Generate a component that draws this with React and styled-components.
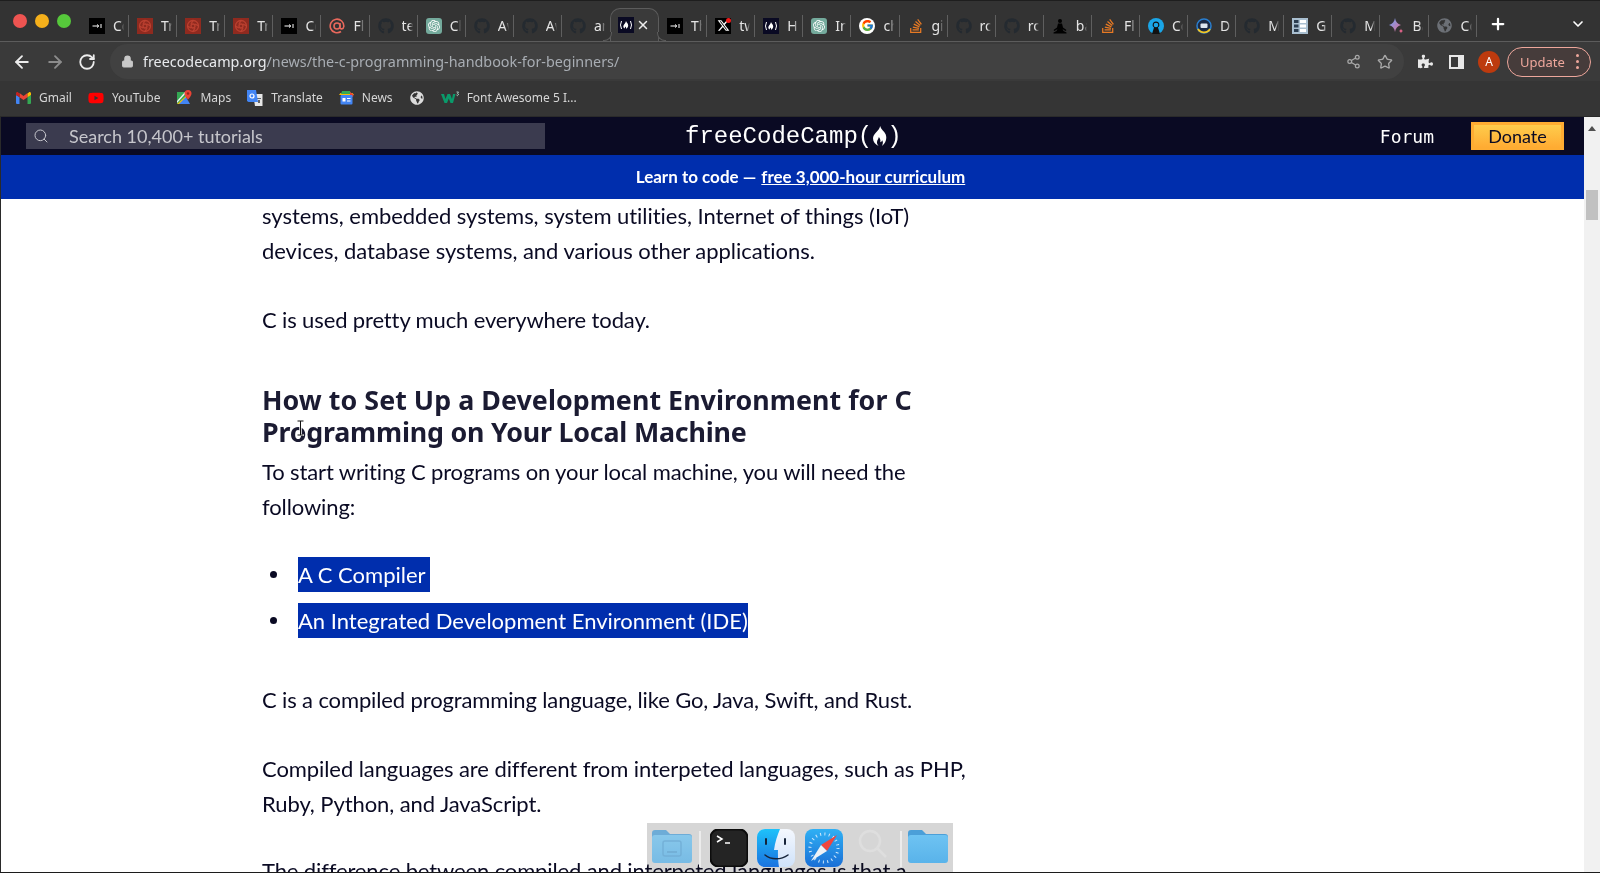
import React from 'react';
import styled, { createGlobalStyle } from 'styled-components';
import { FaGithub, FaStackOverflow, FaPuzzlePiece, FaGlobeAmericas, FaYoutube } from 'react-icons/fa';
import { FaXTwitter } from 'react-icons/fa6';
import { FcGoogle } from 'react-icons/fc';
import { SiOpenai } from 'react-icons/si';
import { ArrowLeft, ArrowRight, RotateCw, Lock, Share2, Star, Plus, ChevronDown, Search, X } from 'lucide-react';

const GlobalStyle = createGlobalStyle`
  html, body { margin: 0; padding: 0; overflow: hidden; background: #fff; }
  * { box-sizing: border-box; }
`;

const Window = styled.div`
  position: relative;
  width: 1600px;
  height: 873px;
  overflow: hidden;
  display: flex;
  flex-direction: column;
  font-family: "Noto Sans", sans-serif;
  border-bottom: 1px solid #1c1c1c;
`;

const TabStrip = styled.div`
  height: 42px;
  flex: none;
  display: flex;
  background: #333333;
  border-top: 1px solid #1e1e1e;
  border-bottom: 1px solid #5c5c5c;
`;
const Lights = styled.div`
  width: 81px;
  flex: none;
  display: flex;
  gap: 8px;
  padding: 13px 0 0 13px;
`;
const Light = styled.span`
  width: 14px;
  height: 14px;
  border-radius: 50%;
  background: ${p => p.$color};
`;
const Tab = styled.div`
  position: relative;
  width: 48.1px;
  flex: none;
  height: 41px;
  display: flex;
  align-items: center;
  gap: 8px;
  padding: 8px 0 0 8px;
  color: #e4e4e4;
  font-size: 14px;
  &::after {
    content: '';
    display: ${p => (p.$nosep ? 'none' : 'block')};
    position: absolute;
    right: 0;
    top: 14px;
    bottom: 5px;
    width: 1px;
    background: #5f5f5f;
  }
`;
const ActiveTab = styled.div`
  position: relative;
  width: 49px;
  flex: none;
  height: 33px;
  margin-top: 7px;
  display: flex;
  align-items: center;
  gap: 1px;
  padding-left: 7px;
  color: #e8e8e8;
  background: #3a3a3a;
  border: 1px solid #5c5c5c;
  border-bottom: none;
  border-radius: 10px 10px 0 0;
  z-index: 1;
  &::before, &::after {
    content: '';
    position: absolute;
    bottom: 0;
    width: 8px;
    height: 8px;
    border-bottom: 1px solid #5c5c5c;
    background: #333333;
  }
  &::before {
    left: -8px;
    border-right: 1px solid #5c5c5c;
    border-bottom-right-radius: 8px;
  }
  &::after {
    right: -8px;
    border-left: 1px solid #5c5c5c;
    border-bottom-left-radius: 8px;
  }
`;
const TabLabel = styled.span`
  width: 11px;
  overflow: hidden;
  white-space: nowrap;
  line-height: 20px;
  -webkit-mask-image: linear-gradient(90deg, #000 65%, transparent);
  mask-image: linear-gradient(90deg, #000 65%, transparent);
`;
const IconTile = styled.span`
  width: 16px;
  height: 16px;
  flex: none;
  display: flex;
  align-items: center;
  justify-content: center;
  background: ${p => p.$bg || 'transparent'};
  border-radius: ${p => p.$radius || 0}px;
  color: ${p => p.$color || '#fff'};
`;
const StripEnd = styled.div`
  flex: 1;
  display: flex;
  align-items: center;
  justify-content: space-between;
  padding: 6px 14px 0 12px;
  color: #fff;
`;

const Toolbar = styled.div`
  height: 39px;
  flex: none;
  display: flex;
  align-items: center;
  background: #3a3a3a;
  padding-left: 12px;
  color: #e6e6e6;
`;
const NavIcon = styled.span`
  width: 33px;
  flex: none;
  display: flex;
  color: ${p => p.$dim ? '#8c8c8c' : '#ececec'};
`;
const Omnibox = styled.div`
  width: 1294px;
  height: 35px;
  margin-left: -1px;
  flex: none;
  display: flex;
  align-items: center;
  background: #414141;
  border-radius: 18px;
  padding-left: 11px;
  color: #c8c8c8;
`;
const Url = styled.div`
  flex: 1;
  margin-left: 9px;
  font-size: 14.35px;
  color: #a8adb3;
  white-space: nowrap;
  b { font-weight: 400; color: #e8eaed; }
`;
const OmniActions = styled.div`
  display: flex;
  align-items: center;
  gap: 16px;
  padding-right: 11px;
  color: #a9a9a9;
`;
const ToolActions = styled.div`
  display: flex;
  align-items: center;
  margin-left: 14px;
  color: #e8e8e8;
`;
const Panel = styled.span`
  display: block;
  width: 15px;
  height: 14px;
  margin-left: 16px;
  border: 2px solid #e8e8e8;
  border-right-width: 6px;
  background: #3a3a3a;
`;
const Avatar = styled.span`
  width: 22px;
  height: 22px;
  margin-left: 14px;
  border-radius: 50%;
  background: #bd3a0e;
  color: #fff;
  font-size: 12px;
  display: flex;
  align-items: center;
  justify-content: center;
`;
const UpdatePill = styled.div`
  width: 84px;
  height: 30px;
  margin-left: 7px;
  border: 1px solid #eea79c;
  border-radius: 15px;
  background: #463c3b;
  color: #eea79c;
  font-size: 13px;
  display: flex;
  align-items: center;
  justify-content: space-between;
  padding: 0 11px 0 12px;
`;
const Dots = styled.span`
  display: flex;
  flex-direction: column;
  gap: 2.5px;
  i { display: block; width: 3.5px; height: 3.5px; border-radius: 50%; background: #eea79c; }
`;

const BookmarkBar = styled.div`
  height: 36px;
  flex: none;
  display: flex;
  align-items: center;
  gap: 16px;
  padding: 0 0 2px 16px;
  background: #353535;
  color: #d6d6d6;
  font-size: 12px;
  border-bottom: 1px solid #2a2a2a;
`;
const Bookmark = styled.div`
  display: flex;
  align-items: center;
  gap: 8px;
  white-space: nowrap;
`;

const Viewport = styled.div`
  flex: 1;
  min-height: 0;
  display: flex;
  border-left: 1px solid #2a2a2a;
`;
const Main = styled.div`
  flex: 1;
  min-width: 0;
  display: flex;
  flex-direction: column;
  overflow: hidden;
`;
const TopNav = styled.nav`
  height: 38px;
  flex: none;
  display: flex;
  align-items: center;
  background: #0a0a23;
  padding: 0 20px 0 25px;
`;
const SearchBox = styled.div`
  width: 519px;
  height: 26px;
  flex: none;
  display: flex;
  align-items: center;
  background: #3b3b4f;
  padding-left: 7px;
  color: #c6c6cc;
  font: 18px "Lato", sans-serif;
`;
const SearchText = styled.span`
  margin-left: 20px;
`;
const Logo = styled.div`
  margin-left: 140px;
  display: flex;
  align-items: center;
  color: #fff;
  font: 24px "Liberation Mono", monospace;
`;
const NavRight = styled.div`
  margin-left: auto;
  display: flex;
  align-items: center;
  gap: 37px;
`;
const ForumLink = styled.span`
  color: #fff;
  font: 18px "DejaVu Sans Mono", monospace;
`;
const DonateButton = styled.span`
  width: 93px;
  height: 28px;
  display: flex;
  align-items: center;
  justify-content: center;
  background: linear-gradient(#fecc4c, #ffac33);
  border: 3px solid #feac32;
  color: #0a0a23;
  font: 18px "Lato", sans-serif;
`;
const Banner = styled.div`
  height: 44px;
  flex: none;
  display: flex;
  align-items: center;
  justify-content: center;
  padding: 0 0 2px 16px;
  background: #002ead;
  color: #fff;
  font: 700 17px "Lato", sans-serif;
  u { margin-left: 5px; }
`;
const Article = styled.article`
  width: 972px;
  padding-left: 261px;
  color: #0a0a23;
  font: 22px/35px "Lato", sans-serif;
`;
const Para = styled.p`
  margin: ${p => p.$mt || 0}px 0 ${p => p.$mb ?? 33}px;
  letter-spacing: ${p => p.$ls || 0}px;
`;
const Heading = styled.h2`
  margin: 47px 0 6px;
  font: 700 26.8px/32px "Noto Sans", sans-serif;
  letter-spacing: 0.05px;
  color: #1b1b32;
`;
const HeadingTail = styled.span`
  letter-spacing: -0.2px;
`;
const List = styled.ul`
  margin: 33px 0 44px;
  padding: 0;
  list-style: none;
`;
const Item = styled.li`
  display: flex;
  align-items: center;
  margin-bottom: 11px;
  &:last-child { margin-bottom: 0; }
`;
const Bullet = styled.span`
  width: 7px;
  height: 7px;
  margin: 0 21px 0 8px;
  flex: none;
  border-radius: 50%;
  background: #0a0a23;
`;
const Selected = styled.span`
  display: inline-block;
  padding-right: ${p => p.$trail || 0}px;
  background: #002ead;
  color: #fff;
`;
const Scrollbar = styled.div`
  width: 16px;
  flex: none;
  background: #f1f1f1;
  display: flex;
  flex-direction: column;
  align-items: center;
  padding-top: 9px;
`;
const ScrollArrow = styled.span`
  width: 0;
  height: 0;
  border: 4px solid transparent;
  border-top: none;
  border-bottom: 5px solid #505050;
`;
const ScrollThumb = styled.span`
  width: 12px;
  height: 30px;
  margin-top: 59px;
  background: #c1c1c1;
`;

const Dock = styled.div`
  position: absolute;
  left: 647px;
  bottom: 0;
  width: 306px;
  height: 49px;
  display: flex;
  align-items: flex-start;
  padding: 6px 0 0 5px;
  &::before {
    content: '';
    position: absolute;
    inset: 0;
    background: #d6d6d6;
    mix-blend-mode: multiply;
  }
`;
const DockSlot = styled.span`
  position: relative;
  flex: none;
  width: ${p => p.$w}px;
  margin-left: ${p => p.$ml || 0}px;
  opacity: ${p => p.$fade || 1};
  display: flex;
`;
const DockRule = styled.span`
  position: relative;
  flex: none;
  width: 2px;
  height: 36px;
  margin: 2px 0 0 ${p => p.$ml}px;
  background: #ececec;
`;
const Cursor = styled.svg`
  position: absolute;
  left: 296px;
  top: 420px;
`;

const Flame = ({ size = 14, color = '#fff' }) => (
  <svg width={size * 0.75} height={size} viewBox="0 0 12 16">
    <path fill={color} d="M6.5 0c.6 2.6 3.2 4 4.4 6.6 1.3 3.2.2 7-3 9.4.9-1.6 1.1-3.2.3-4.7-.4 1-1 1.4-1.6 1.6.4-1.6-.2-3.2-1.2-4.2.1 1.6-1.6 2.8-1.4 4.6.1 1 .6 1.8 1.3 2.7C1.8 14.4.3 11.6 1 8.6 1.7 5.600 5.800 4 6.500 0z" />
  </svg>
);

function Favicon({ kind }) {
  switch (kind) {
    case 'term':
      return (
        <IconTile $bg="#000">
          <svg width="16" height="16" viewBox="0 0 16 16"><path d="M3.500 8h6M8 6.500 9.800 8 8 9.500M12 6v4" stroke="#fff" strokeWidth="1" fill="none" /></svg>
        </IconTile>
      );
    case 'swirl':
      return (
        <IconTile $bg="#8f2a1f">
          <svg width="16" height="16" viewBox="0 0 16 16" fill="none" stroke="#bb4030" strokeWidth="1.300">
            <circle cx="8" cy="8" r="2" />
            <path d="M8 2.500a5.500 5.500 0 0 1 5.500 5.500M13.500 8a5.500 5.500 0 0 1-5.500 5.500M8 13.500A5.500 5.500 0 0 1 2.500 8M2.500 8A5.500 5.500 0 0 1 8 2.500M8 2.500 6 6M13.500 8 10 6M8 13.500 10 10M2.500 8 6 10" />
          </svg>
        </IconTile>
      );
    case 'at':
      return (
        <IconTile>
          <svg width="16" height="16" viewBox="0 0 16 16" fill="none" stroke="#e8685c" strokeWidth="1.600">
            <circle cx="8" cy="8" r="3" />
            <path d="M11 5v4.500c0 2 3.500 2 3.800-1A6.800 6.800 0 1 0 12 13.500" />
          </svg>
        </IconTile>
      );
    case 'github':
      return <IconTile $color="#242a30"><FaGithub size={16} /></IconTile>;
    case 'gpt':
      return <IconTile $bg="#74aa9c" $radius={3}><SiOpenai size={12} /></IconTile>;
    case 'fcc':
      return (
        <IconTile $bg="#0a0a23" $color="#fff">
          <svg width="16" height="16" viewBox="0 0 16 16" fill="none" stroke="#fff" strokeWidth="1">
            <path d="M3.500 4Q1.500 8 3.500 12M12.500 4Q14.500 8 12.500 12" />
            <path fill="#fff" stroke="none" d="M8 4c.3 1.300 2.200 2.300 2.200 4.500 0 1.500-1 2.800-2.200 3.500.5-1-.200-2-.700-2.500-.2 1-.6 1.200-.6 2C5.500 11 5 9.800 5.500 8.500 6 7.200 7.800 6 8 4z" />
          </svg>
        </IconTile>
      );
    case 'x':
      return (
        <IconTile $bg="#000" style={{ position: 'relative' }}>
          <FaXTwitter size={13} />
          <svg width="5" height="5" style={{ position: 'absolute', right: 0, top: 0 }}><circle cx="2.500" cy="2.500" r="2.500" fill="#f01a1a" /></svg>
        </IconTile>
      );
    case 'google':
      return (
        <IconTile $bg="#fff" $radius={8}><FcGoogle size={13} /></IconTile>
      );
    case 'so':
      return <IconTile $color="#e87a24"><FaStackOverflow size={16} /></IconTile>;
    case 'yoga':
      return (
        <IconTile>
          <svg width="16" height="16" viewBox="0 0 16 16" fill="#000">
            <circle cx="8" cy="3" r="2" />
            <path d="M6 5.500h4l1 4 3.500 2.500-1 1L10.500 11l1 2 3 1.500v1H1.500v-1l3-1.500 1-2-3 2-1-1L5 9.500z" />
          </svg>
        </IconTile>
      );
    case 'ring':
      return (
        <IconTile>
          <svg width="16" height="16" viewBox="0 0 16 16">
            <circle cx="8" cy="8" r="8" fill="#1aa6e8" />
            <path d="M8 3.500a3.300 3.300 0 0 0-2 6L4 16h8l-2-6.500a3.300 3.300 0 0 0-2-6z" fill="#111" />
            <circle cx="8" cy="7" r="2.300" fill="#1aa6e8" />
          </svg>
        </IconTile>
      );
    case 'badge':
      return (
        <IconTile>
          <svg width="16" height="16" viewBox="0 0 16 16" fill="none">
            <circle cx="8" cy="8" r="7" fill="#1c2a44" stroke="#2a7fd0" strokeWidth="1.500" />
            <path d="M2 11a7 7 0 0 0 12 0" stroke="#f3c623" strokeWidth="1.800" />
            <rect x="4.500" y="5.500" width="7" height="4.500" rx="1" fill="#dfe6ee" />
          </svg>
        </IconTile>
      );
    case 'columns':
      return (
        <IconTile $bg="#a9bfd0">
          <svg width="16" height="16" viewBox="0 0 16 16" fill="#2b3d50">
            <path d="M2 2h4.500v3H2zM2 6.500h4.500v3H2zM2 11h4.500v3H2z" />
            <path fill="#fff" d="M8 2h6v3H8zM8 6.500h6v3H8zM8 11h6v3H8z" />
          </svg>
        </IconTile>
      );
    case 'spark':
      return (
        <IconTile>
          <svg width="16" height="16" viewBox="0 0 16 16">
            <defs>
              <linearGradient id="sparkGrad" x1="0" y1="0" x2="1" y2="1">
                <stop offset="0" stopColor="#6aa6ff" />
                <stop offset="1" stopColor="#e26a8a" />
              </linearGradient>
            </defs>
            <path fill="url(#sparkGrad)" d="M7 0c.5 3.500 2.500 6 6 7-3.500 1-5.500 3.500-6 7-.5-3.500-2.500-6-6-7 3.500-1 5.500-3.500 6-7z" />
            <path fill="#e0648a" d="M13 10.500c.2 1.200.8 2 2 2.500-1.200.5-1.800 1.300-2 2.500-.2-1.200-.8-2-2-2.500 1.200-.5 1.800-1.300 2-2.500z" />
          </svg>
        </IconTile>
      );
    case 'globe':
      return <IconTile $color="#6c7076"><FaGlobeAmericas size={15} /></IconTile>;
    default:
      return null;
  }
}

const leftTabs = [
  ['term', 'Command'], ['swirl', 'Tree'], ['swirl', 'Tree'], ['swirl', 'Tree'], ['term', 'Command'],
  ['at', 'Flow'], ['github', 'test'], ['gpt', 'Chat'], ['github', 'Awesome'], ['github', 'Awesome'], ['github', 'and'],
];
const rightTabs = [
  ['term', 'The'], ['x', 'tw'], ['fcc', 'How'], ['gpt', 'Intro'], ['google', 'cheat'], ['so', 'git'],
  ['github', 'rc'], ['github', 'rc'], ['yoga', 'ba'], ['so', 'Flex'], ['ring', 'Code'], ['badge', 'Dev'],
  ['github', 'Mern'], ['columns', 'Grid'], ['github', 'Mern'], ['spark', 'Bard'], ['globe', 'Code'],
];

const GmailIcon = () => (
  <svg width="15" height="12" viewBox="0 0 15 12">
    <path fill="#4285f4" d="M0 3v8a1 1 0 0 0 1 1h2.500V5z" />
    <path fill="#34a853" d="M15 3v8a1 1 0 0 1-1 1h-2.500V5z" />
    <path fill="#ea4335" d="M3.500 5.200V1L7.500 4 11.500 1v4.200L7.500 8z" />
    <path fill="#c5221f" d="M0 3V1.500C0 .4 1.300-.3 2.200.4L3.500 1.400v3.800z" />
    <path fill="#fbbc04" d="M15 3V1.500c0-1.100-1.300-1.800-2.200-1.100L11.500 1.400v3.800z" />
  </svg>
);
const MapsIcon = () => (
  <svg width="16" height="16" viewBox="0 0 16 16">
    <path fill="#34a853" d="M1 2h9v12H1z" />
    <path fill="#fbbc04" d="M1 14 10 6v8z" />
    <path fill="#4285f4" d="M3 14l7-7 4 7z" />
    <path fill="#f1f1f1" d="M1 11 9 2h2L1 13z" />
    <path fill="#ea4335" d="M12 0a3.500 3.500 0 0 0-3.500 3.500C8.500 6 12 9.500 12 9.500s3.500-3.500 3.500-6A3.500 3.500 0 0 0 12 0z" />
    <circle cx="12" cy="3.500" r="1.300" fill="#8f2a1f" />
  </svg>
);
const TranslateIcon = () => (
  <svg width="16" height="16" viewBox="0 0 16 16">
    <path fill="#e6e6e6" d="M6 4h9.500v12H8z" />
    <path fill="#5f6368" d="M10 8h4v1h-4zM11 10h2v3h-2z" />
    <path fill="#4285f4" d="M0 0h9l2 12H1.500L0 11z" />
    <circle cx="5" cy="6" r="2" fill="none" stroke="#fff" strokeWidth="1.200" />
  </svg>
);
const NewsIcon = () => (
  <svg width="15" height="14" viewBox="0 0 15 14">
    <path fill="#fbbc04" d="M0 4l1.500-2h12L15 4z" />
    <path fill="#34a853" d="M3 0h8l1 3H2z" />
    <path fill="#ea4335" d="M11 1l3.500 2.500L14 6l-3-2z" />
    <rect x="1.500" y="4" width="12" height="9.500" rx="1" fill="#4285f4" />
    <path fill="#fff" d="M3.500 7h3v3.500h-3zM8 7h3.500v1H8zM8 9.500h3.500v1H8z" />
  </svg>
);
const W3Icon = () => (
  <svg width="18" height="14" viewBox="0 0 18 14">
    <path fill="#0a9a6a" d="M0 3h3l1.500 5L6.500 3h2.500l2 5 1-5h2.500l-2.500 9h-2.500L7.800 7.500 6 12H3.500z" />
    <path stroke="#bfe6d8" strokeWidth=".8" fill="none" d="M15.500 1h2l-1 1.500a1 1 0 1 1-1 1.500" />
  </svg>
);

const FolderIcon = ({ id, monitor }) => (
  <svg width="40" height="34" viewBox="0 0 40 34">
    <defs>
      <linearGradient id={id} x1="0" y1="0" x2="0" y2="1">
        <stop offset="0" stopColor="#6ec3f2" />
        <stop offset="1" stopColor="#59b3ea" />
      </linearGradient>
    </defs>
    <path fill="#4b9fd8" d="M3 1h11l4 4h19a3 3 0 0 1 3 3v5H0V4a3 3 0 0 1 3-3z" />
    <rect y="6" width="40" height="28" rx="3" fill={`url(#${id})`} />
    {monitor && (
      <g fill="none" stroke="#4f9fd4" strokeWidth="1.500" opacity=".8">
        <rect x="11" y="12" width="18" height="15" rx="2" />
        <path d="M15 23h10" strokeWidth="2" />
      </g>
    )}
  </svg>
);
const TerminalIcon = () => (
  <svg width="38" height="38" viewBox="0 0 38 38">
    <rect x=".5" y=".5" width="37" height="37" rx="8" fill="#242424" stroke="#0c0c0c" strokeWidth="2" />
    <path d="M7 7l5 3-5 3" fill="none" stroke="#fff" strokeWidth="1.500" />
    <path d="M15 14h5" stroke="#fff" strokeWidth="1.500" />
  </svg>
);
const FinderIcon = () => (
  <svg width="38" height="38" viewBox="0 0 38 38">
    <defs>
      <linearGradient id="finderA" x1="0" y1="0" x2="0" y2="1">
        <stop offset="0" stopColor="#1ec2fa" />
        <stop offset="1" stopColor="#1a72e0" />
      </linearGradient>
      <linearGradient id="finderB" x1="0" y1="0" x2="0" y2="1">
        <stop offset="0" stopColor="#f4f8fe" />
        <stop offset="1" stopColor="#cfe2fa" />
      </linearGradient>
    </defs>
    <rect width="38" height="38" rx="8" fill="url(#finderB)" />
    <path d="M8 0h15c-2.500 6-5 13-6 21h4c-.2 5 0 11 1 17H8a8 8 0 0 1-8-8V8a8 8 0 0 1 8-8z" fill="url(#finderA)" />
    <path d="M9 10v5M28 10v5" stroke="#16243a" strokeWidth="2" strokeLinecap="round" />
    <path d="M8 26c6 5 16 5 23 0" stroke="#16243a" strokeWidth="1.500" fill="none" strokeLinecap="round" />
  </svg>
);
const SafariIcon = () => (
  <svg width="38" height="38" viewBox="0 0 38 38">
    <defs>
      <linearGradient id="safariA" x1="0" y1="0" x2="0" y2="1">
        <stop offset="0" stopColor="#2fb0f4" />
        <stop offset="1" stopColor="#1a6fd6" />
      </linearGradient>
    </defs>
    <rect width="38" height="38" rx="8" fill="url(#safariA)" />
    <circle cx="19" cy="19" r="14" fill="none" stroke="#cfe8fb" strokeWidth="3" strokeDasharray="1 3.400" />
    <path d="M32 6 16 16l6 6z" fill="#f0453e" />
    <path d="M6 32l10-16 6 6z" fill="#eef2f6" />
  </svg>
);
const MagnifierIcon = () => (
  <svg width="30" height="30" viewBox="0 0 30 30" fill="none" stroke="#dedede" strokeWidth="2.500">
    <circle cx="12" cy="12" r="10" />
    <path d="M19 19l9 9" />
  </svg>
);

export default function App() {
  return (
    <Window>
      <GlobalStyle />
      <TabStrip>
        <Lights>
          <Light $color="#ee5451" />
          <Light $color="#f5b01b" />
          <Light $color="#56c83b" />
        </Lights>
        {leftTabs.map(([kind, label], i) => (
          <Tab key={i} $nosep={i === leftTabs.length - 1}>
            <Favicon kind={kind} />
            <TabLabel>{label}</TabLabel>
          </Tab>
        ))}
        <ActiveTab>
          <Favicon kind="fcc" />
          <IconTile $color="#ececec"><X size={14} strokeWidth={2.500} /></IconTile>
        </ActiveTab>
        {rightTabs.map(([kind, label], i) => (
          <Tab key={i}>
            <Favicon kind={kind} />
            <TabLabel>{label}</TabLabel>
          </Tab>
        ))}
        <StripEnd>
          <Plus size={18} strokeWidth={3} />
          <ChevronDown size={16} strokeWidth={2.500} />
        </StripEnd>
      </TabStrip>

      <Toolbar>
        <NavIcon><ArrowLeft size={20} strokeWidth={2.200} /></NavIcon>
        <NavIcon $dim><ArrowRight size={20} strokeWidth={2.200} /></NavIcon>
        <NavIcon><RotateCw size={18} strokeWidth={2.400} /></NavIcon>
        <Omnibox>
          <Lock size={13} fill="#c8c8c8" />
          <Url><b>freecodecamp.org</b>/news/the-c-programming-handbook-for-beginners/</Url>
          <OmniActions>
            <Share2 size={15} />
            <Star size={16} strokeWidth={2} />
          </OmniActions>
        </Omnibox>
        <ToolActions>
          <FaPuzzlePiece size={15} />
          <Panel />
          <Avatar>A</Avatar>
          <UpdatePill>
            Update
            <Dots><i /><i /><i /></Dots>
          </UpdatePill>
        </ToolActions>
      </Toolbar>

      <BookmarkBar>
        <Bookmark><GmailIcon />Gmail</Bookmark>
        <Bookmark><IconTile $color="#f00"><FaYoutube size={18} /></IconTile>YouTube</Bookmark>
        <Bookmark><MapsIcon />Maps</Bookmark>
        <Bookmark><TranslateIcon />Translate</Bookmark>
        <Bookmark><NewsIcon />News</Bookmark>
        <IconTile $color="#dcdcdc"><FaGlobeAmericas size={14} /></IconTile>
        <Bookmark><W3Icon />Font Awesome 5 I...</Bookmark>
      </BookmarkBar>

      <Viewport>
        <Main>
          <TopNav>
            <SearchBox>
              <Search size={16} strokeWidth={1.500} />
              <SearchText>Search 10,400+ tutorials</SearchText>
            </SearchBox>
            <Logo>freeCodeCamp(<Flame size={20} />)</Logo>
            <NavRight>
              <ForumLink>Forum</ForumLink>
              <DonateButton>Donate</DonateButton>
            </NavRight>
          </TopNav>
          <Banner>Learn to code — <u>free 3,000-hour curriculum</u></Banner>
          <Article>
            <Para $mt={-1} $mb={34} $ls={-0.04}>systems, embedded systems, system utilities, Internet of things (IoT) devices, database systems, and various other applications.</Para>
            <Para $ls={-0.13}>C is used pretty much everywhere today.</Para>
            <Heading>How to Set Up a Development Environment for C <HeadingTail>Programming on Your Local Machine</HeadingTail></Heading>
            <Para $mb={0} $ls={-0.12}>To start writing C programs on your local machine, you will need the following:</Para>
            <List>
              <Item><Bullet /><Selected $trail={4}>A C Compiler</Selected></Item>
              <Item><Bullet /><Selected>An Integrated Development Environment (IDE)</Selected></Item>
            </List>
            <Para $mb={34} $ls={-0.13}>C is a compiled programming language, like Go, Java, Swift, and Rust.</Para>
            <Para $mb={32} $ls={-0.08}>Compiled languages are different from interpeted languages, such as PHP, Ruby, Python, and JavaScript.</Para>
            <Para $ls={-0.13}>The difference between compiled and interpeted languages is that a</Para>
          </Article>
        </Main>
        <Scrollbar>
          <ScrollArrow />
          <ScrollThumb />
        </Scrollbar>
      </Viewport>

      <Cursor width="9" height="16" viewBox="0 0 9 16" fill="none">
        <path d="M1 .5h7M1 15.500h7M4.500 1v14" stroke="#fff" strokeWidth="2.500" />
        <path d="M1.500 1h6M1.500 15h6M4.500 1v14" stroke="#111" strokeWidth="1" />
      </Cursor>

      <Dock>
        <DockSlot $w={40} $fade={0.75}><FolderIcon id="folderA" monitor /></DockSlot>
        <DockRule $ml={7} />
        <DockSlot $w={38} $ml={9}><TerminalIcon /></DockSlot>
        <DockSlot $w={38} $ml={9}><FinderIcon /></DockSlot>
        <DockSlot $w={38} $ml={10}><SafariIcon /></DockSlot>
        <DockSlot $w={30} $ml={15}><MagnifierIcon /></DockSlot>
        <DockRule $ml={12} />
        <DockSlot $w={40} $ml={6}><FolderIcon id="folderB" /></DockSlot>
      </Dock>
    </Window>
  );
}
